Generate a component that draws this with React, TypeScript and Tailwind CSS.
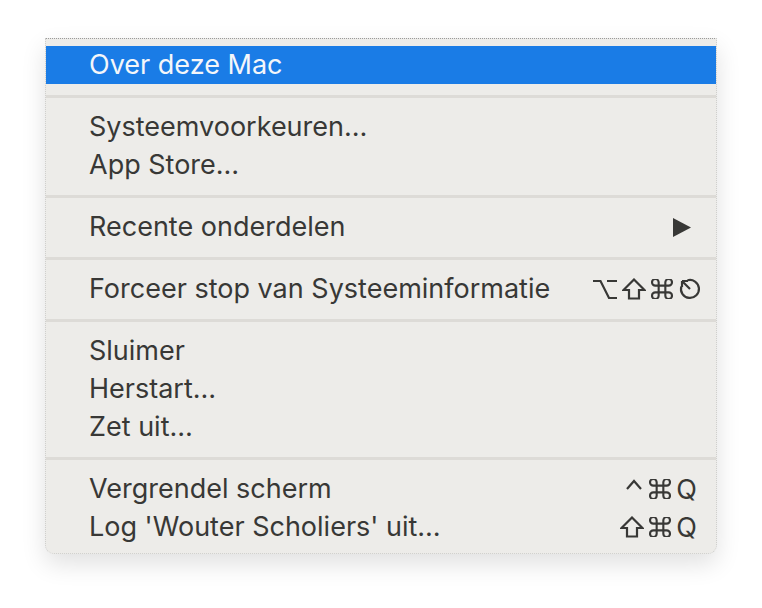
import React from "react";

type Key = "opt" | "shift" | "cmd" | "esc" | "ctrl" | "Q";

type Item = {
  label: string;
  shortcut?: Key[];
  submenu?: boolean;
  active?: boolean;
};

const groups: Item[][] = [
  [{ label: "Over deze Mac", active: true }],
  [{ label: "Systeemvoorkeuren…" }, { label: "App Store…" }],
  [{ label: "Recente onderdelen", submenu: true }],
  [
    {
      label: "Forceer stop van Systeeminformatie",
      shortcut: ["opt", "shift", "cmd", "esc"],
    },
  ],
  [{ label: "Sluimer" }, { label: "Herstart…" }, { label: "Zet uit…" }],
  [
    { label: "Vergrendel scherm", shortcut: ["ctrl", "cmd", "Q"] },
    { label: "Log 'Wouter Scholiers' uit…", shortcut: ["shift", "cmd", "Q"] },
  ],
];

const stroke = {
  fill: "none",
  stroke: "currentColor",
  strokeWidth: 2.2,
  strokeLinejoin: "miter" as const,
};

const KeyGlyph = ({ k }: { k: Key }) => {
  switch (k) {
    case "opt":
      return (
        <svg width="24" height="21" viewBox="0 0 24 21" {...stroke}>
          <path d="M0 2H7.5L16 19H24M14 2H24" />
        </svg>
      );
    case "shift":
      return (
        <svg width="24" height="22" viewBox="0 0 24 22" {...stroke}>
          <path d="M12 1.5L22.5 12H17V20.5H7V12H1.5Z" />
        </svg>
      );
    case "cmd":
      return (
        <svg width="22" height="20" viewBox="3 3 18 18" {...stroke} strokeWidth={1.9}>
          <path d="M15 6v12a3 3 0 1 0 3-3H6a3 3 0 1 0 3 3V6a3 3 0 1 0-3 3h12a3 3 0 1 0-3-3" />
        </svg>
      );
    case "esc":
      return (
        <svg width="24" height="24" viewBox="0 0 24 24" {...stroke} className="-mr-[5px]">
          <path d="M9.5 3.3A9 9 0 1 1 3.3 9.5" />
          <path d="M12 12L4 4M4 4V10M4 4H10" />
        </svg>
      );
    case "ctrl":
      return (
        <svg width="16" height="22" viewBox="0 0 16 22" {...stroke} className="mr-[2px]">
          <path d="M1 11L8 3L15 11" />
        </svg>
      );
    case "Q":
      return <span className="text-[27px] leading-none">Q</span>;
  }
};

const MenuRow = ({ item }: { item: Item }) => (
  <div
    className={
      "flex h-[38px] items-center justify-between pl-[43px] pr-[19px] " +
      (item.active ? "bg-[#1a7ce6] text-[#f4f6fa]" : "text-[#383836]")
    }
  >
    <span className="text-[27px]">{item.label}</span>
    {item.shortcut && (
      <span className="flex items-center gap-[5px]">
        {item.shortcut.map((k, i) => (
          <KeyGlyph key={i} k={k} />
        ))}
      </span>
    )}
    {item.submenu && (
      <svg width="18" height="19" viewBox="0 0 18 19" className="mr-[6px]">
        <path d="M0 0L18 9.5L0 19Z" fill="currentColor" />
      </svg>
    )}
  </div>
);

export default function App() {
  return (
    <div className="h-[608px] w-[762px] bg-white pt-[38px] font-['Inter','Liberation_Sans',sans-serif]">
      <div className="ml-[45px] w-[672px] rounded-b-[9px] border-x border-b border-[#cfcfcd] border-t border-t-[#9a9a9a] border-dotted bg-[#edece9] pb-[7px] pt-[7px] shadow-[0_10px_24px_rgba(0,0,0,0.12)]">
        {groups.map((group, gi) => (
          <div key={gi}>
            {gi > 0 && (
              <div className="flex h-[24px] items-center">
                <div className="h-[3px] w-full bg-[#dddbd7]" />
              </div>
            )}
            {group.map((item) => (
              <MenuRow key={item.label} item={item} />
            ))}
          </div>
        ))}
      </div>
    </div>
  );
}
